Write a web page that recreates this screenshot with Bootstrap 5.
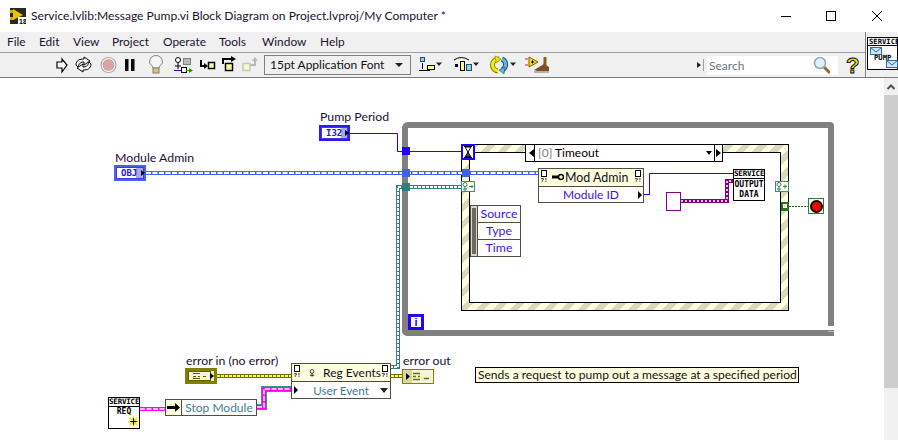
<!DOCTYPE html>
<html lang="en">
<head>
<meta charset="UTF-8">
<title>Service.lvlib:Message Pump.vi Block Diagram</title>
<link href="https://cdn.jsdelivr.net/npm/bootstrap@5.3.1/dist/css/bootstrap.min.css" rel="stylesheet">
<script src="https://cdn.jsdelivr.net/npm/bootstrap@5.3.1/dist/js/bootstrap.bundle.min.js"></script>
<style>
  body { width: 898px; height: 440px; overflow: hidden; background: #fff; color: #000; font-family: "Lato", "Noto Sans", sans-serif; font-size: 12px; }

  /* window chrome */
  .title-bar { height: 32px; padding-left: 10px; }
  .title-text { margin-left: 5px; font-size: 12.100px; color: #1c1030; white-space: nowrap; }
  .win-btns { margin-left: auto; }
  .chrome { height: 46px; background: #f0f0f0; border-bottom: 1px solid #7a7a7a; }
  .chrome-main { width: 865px; }
  .menu-row { height: 21px; border-bottom: 1px solid #a0a0a0; padding-left: 7px; flex-wrap: nowrap; }
  .menu-row .nav-link { padding: 0; color: #1c1030; font-size: 11.900px; line-height: 19px; }
  .menu-file { width: 32px; }
  .menu-edit { width: 34px; }
  .menu-view { width: 39px; }
  .menu-project { width: 51px; }
  .menu-operate { width: 56px; }
  .menu-tools { width: 43px; }
  .menu-window { width: 58px; }
  .tool-row { height: 24px; padding-left: 54px; }
  .font-ring { width: 147px; height: 20px; margin-left: 2px; margin-top: 2px; border: 1px solid #808080; padding-left: 5px; font-size: 12px; line-height: 18px; color: #111; }
  .ring-arrow { width: 0; height: 0; margin-left: auto; margin-right: 7px; border: 4px solid transparent; border-top-color: #222; border-bottom: 0; }
  .tools-b { margin-left: 5px; }
  .tools-c { margin-left: 138px; }
  .search-wrap { width: 131px; height: 19px; margin-top: 3px; background: #fff; }
  .search-box { flex: 1; min-width: 0; padding: 0 0 0 2px; border: 0; border-radius: 0; font-size: 12px; line-height: 19px; background: transparent; }
  .search-box::placeholder { color: #6d7480; opacity: 1; }
  .vi-icon { flex: 1; border-left: 1px solid #808080; padding-left: 1px; padding-top: 5px; overflow: hidden; }

  /* diagram */
  .diagram-row { height: 362px; }
  .diagram { position: relative; width: 884px; height: 362px; overflow: hidden; }
  .scroll-col { width: 14px; background: #f0f0f0; }
  .scroll-up { height: 17px; }
  .scroll-thumb { height: 293px; background: #cdcdcd; }

  .wire-layer { position: absolute; left: 0; top: 0; }
  .lv { position: absolute; }
  .lv-label { font-size: 12.300px; line-height: 15px; color: #1c1030; white-space: nowrap; }

  .loop-frame { left: 402px; top: 44px; width: 432px; height: 214px; border: 6px solid #808080; border-radius: 6px 4px 0 5px; }
  .case-frame { left: 461px; top: 66px; width: 328px; height: 167px; border: 1px solid #000; padding: 7px; background: repeating-linear-gradient(135deg, #ffffe1 0 6px, #d9d9c0 6px 12px); }
  .case-inner { height: 100%; background: #fff; border: 1px solid #000; }
  .case-select { left: 525px; top: 66px; width: 198px; height: 18px; border: 1px solid #000; background: #fff; font-size: 12px; line-height: 16px; }
  .sel-cell { width: 9px; border-right: 1px solid #000; }
  .sel-cell-r { width: 8px; border-left: 1px solid #000; border-right: 0; }
  .sel-name { padding-left: 3px; }
  .sel-idx { color: #808080; }
  .sel-drop { margin-left: auto; margin-right: 2px; align-self: center; width: 0; height: 0; border: 3.500px solid transparent; border-top: 4px solid #000; border-bottom: 0; }
  .sel-left { margin: 4px 0 0 3px; width: 0; height: 0; border: 4px solid transparent; border-right: 5px solid #000; border-left: 0; }
  .sel-right { margin: 4px 0 0 1px; width: 0; height: 0; border: 4px solid transparent; border-left: 5px solid #000; border-right: 0; }

  .term-i32 { left: 319px; top: 47px; width: 31px; height: 16px; border: 2px solid #2a18ff; background: #fff; }
  .term-obj { left: 114px; top: 87px; width: 32px; height: 16px; border: 2px solid #4a60ee; background: #fff; }
  .term-inner { height: 100%; border: 1px solid #3a3ae0; font: bold 9px/10px "DejaVu Sans Mono", monospace; color: #2018e0; padding-left: 4px; background: linear-gradient(90deg, #fff 0 19px, #a8a8f0 19px); position: relative; }
  .term-tip { position: absolute; right: -2px; top: 2px; width: 0; height: 0; border: 3px solid transparent; border-left: 4px solid #000; border-right: 0; }

  .tun { width: 8px; height: 8px; }
  .tun-i32 { left: 402px; top: 69px; background: #2000ff; }
  .tun-obj1 { left: 402px; top: 91px; background: #4060f0; }
  .tun-obj2 { left: 462px; top: 91px; background: #4060f0; }
  .tun-err { left: 402px; top: 105px; background: #2f7f7f; }
  .tun-stop { left: 781px; top: 124px; width: 8px; height: 9px; background: #2f6f1f; }
  .tun-stop-dot { width: 4px; height: 4px; margin: 2px; background: #d8f0c0; border: 1px solid #fff; }

  .timeout-term { left: 461px; top: 66px; width: 14px; height: 16px; background: #fff; border: 2px solid #2000ff; }
  .ev-term { width: 14px; height: 11px; background: #ffffe1; border: 1px solid #2f8f8f; }
  .ev-left { left: 461px; top: 103px; }
  .ev-right { left: 775px; top: 103px; }

  .iter-term { left: 408px; top: 236px; width: 16px; height: 16px; border: 3px solid #2000ff; background: #fff; color: #2000ff; font: bold 11px/10px "Liberation Sans", sans-serif; text-align: center; }

  /* property / invoke nodes */
  .lv-node { border: 1px solid #505040; background: #fff; }
  .node-head { height: 18px; background: #ffffe1; border-bottom: 1px solid #505040; padding: 0 1px; font-size: 12px; line-height: 17px; color: #111; }
  .node-row { height: 17px; line-height: 16px; font-size: 12px; text-align: center; position: relative; }
  .node-flags { width: 8px; flex: none; font: bold 6px/7px "Liberation Mono", monospace; color: #000; text-align: center; }
  .flag-doc { width: 6px; height: 7px; margin: 1px auto 0; border: 1px solid #000; background: #fff; }
  .txt-blue { color: #3c14e8; }
  .txt-teal { color: #3f8096; font-size: 11.700px; }
  .row-tip-r { position: absolute; right: 1px; top: 4px; width: 0; height: 0; border: 4px solid transparent; border-left: 4px solid #000; border-right: 0; }
  .row-tip-l { position: absolute; left: 2px; top: 4px; width: 0; height: 0; border: 4px solid transparent; border-left: 4px solid #000; border-right: 0; }
  .row-drop { position: absolute; right: 2px; top: 6px; width: 0; height: 0; border: 4px solid transparent; border-top: 5px solid #222; border-bottom: 0; }

  .mod-admin { left: 538px; top: 90px; width: 106px; height: 35px; }
  .mod-admin .node-head { font-size: 12.400px; }
  .head-name { flex: 1; padding-left: 1px; white-space: nowrap; }
  .reg-events { left: 291px; top: 285px; width: 100px; height: 36px; }
  .reg-events .head-name { padding-left: 8px; }

  .unbundle { left: 470px; top: 127px; width: 51px; height: 52px; border: 1px solid #505040; background: #fff; }
  .grip { width: 7px; background: #d8d8c4; border-right: 1px solid #505040; padding: 2px 1px; }
  .grip-bar { height: 100%; width: 4px; background: #6a6a62; }
  .ub-rows { flex: 1; }
  .ub-row { flex: 1; text-align: center; font-size: 12.300px; line-height: 15px; color: #3c14e8; border-bottom: 1px solid #505040; }
  .ub-row:last-child { border-bottom: 0; }

  .stop-module { left: 165px; top: 321px; width: 92px; height: 17px; border: 1px solid #505040; background: #fff; }
  .sm-cell { width: 16px; background: #ffffe1; border-right: 1px solid #505040; }
  .sm-name { flex: 1; text-align: center; font-size: 12px; line-height: 15px; color: #3f8096; white-space: nowrap; }

  .pix-box { border: 1.500px solid #000; background: #fff; font: bold 8px/10px "DejaVu Sans Mono", monospace; text-align: center; color: #000; }
  .pix-head { border-bottom: 1px solid #000; height: 9px; font-size: 7.500px; line-height: 8px; letter-spacing: -.2px; white-space: nowrap; overflow: hidden; }
  .svc-output { left: 733px; top: 91px; width: 32px; height: 32px; }
  .svc-output .pix-body { padding-top: 1px; }
  .svc-req { left: 108px; top: 319px; width: 32px; height: 32px; position: absolute; }
  .svc-req .pix-body { padding-top: 1px; line-height: 8px; }

  .purple-const { left: 666px; top: 114px; width: 15px; height: 19px; border: 1px solid #800080; background: #fff; }
  .stop-btn { left: 808px; top: 120px; width: 16px; height: 16px; border: 1px solid #2f7f1f; background: #fff; padding: .5px; }
  .stop-dot { width: 13px; height: 13px; border-radius: 50%; background: #f00; border: 2px solid #000; }

  .err-in { left: 185px; top: 290px; width: 32px; height: 16px; border: 3px solid #808000; background: #e8e8c0; }
  .err-out { left: 402px; top: 291px; width: 32px; height: 15px; border: 1px solid #808000; background: #f6f6d8; }
  .lb-pump { left: 320px; top: 31px; }
  .lb-mod { left: 115px; top: 72px; }
  .lb-errin { left: 186px; top: 275px; }
  .lb-errout { left: 403px; top: 275px; }
  .comment-box { left: 475px; top: 289px; width: 324px; height: 16px; border: 1px solid #000; background: #ffffe1; font-size: 12.050px; line-height: 14px; padding-left: 2px; color: #111; white-space: nowrap; }
</style>
</head>
<body>
  <div class="title-bar d-flex align-items-center">
    <svg width="16" height="16" viewBox="0 0 16 16">
      <rect width="16" height="16" fill="#2a2a1a"/>
      <rect x="0" y="2" width="4" height="3" fill="#e0a000"/><rect x="0" y="9" width="4" height="3" fill="#e0a000"/>
      <polygon points="3,1 13,7 3,12" fill="#f0c000"/>
      <rect x="8" y="9" width="8" height="7" fill="#fff"/>
      <text x="9" y="15.500" font-size="7" font-weight="700" font-family="Liberation Sans" fill="#000">18</text>
    </svg>
    <span class="title-text">Service.lvlib:Message Pump.vi Block Diagram on Project.lvproj/My Computer *</span>
    <svg class="win-btns" width="122" height="20" viewBox="776 5 122 20">
      <path d="M781 15.500H791" stroke="#000" fill="none"/>
      <rect x="826.500" y="10.500" width="9" height="9" stroke="#000" fill="none"/>
      <path d="M872 10L882 20M882 10L872 20" stroke="#000" fill="none"/>
    </svg>
  </div>

  <div class="chrome d-flex">
    <div class="chrome-main">
      <ul class="nav menu-row">
        <li class="nav-item menu-file"><a class="nav-link" href="#">File</a></li>
        <li class="nav-item menu-edit"><a class="nav-link" href="#">Edit</a></li>
        <li class="nav-item menu-view"><a class="nav-link" href="#">View</a></li>
        <li class="nav-item menu-project"><a class="nav-link" href="#">Project</a></li>
        <li class="nav-item menu-operate"><a class="nav-link" href="#">Operate</a></li>
        <li class="nav-item menu-tools"><a class="nav-link" href="#">Tools</a></li>
        <li class="nav-item menu-window"><a class="nav-link" href="#">Window</a></li>
        <li class="nav-item"><a class="nav-link" href="#">Help</a></li>
      </ul>
      <div class="tool-row d-flex">
        <svg width="208" height="24" viewBox="54 53 208 24">
          <!-- run -->
          <polygon points="57,62 62,62 62,59 67,65 62,72 62,68 57,68" fill="#fff" stroke="#000" stroke-width="1.200"/>
          <!-- run continuously -->
          <path d="M76 65C76 60 80 59 84 59V57L90 61L84 65V62C81 62 79 63 78 67Z" fill="#fff" stroke="#000"/>
          <path d="M91 64C91 69 87 70 83 70V72L77 68L83 64V67C86 67 88 66 89 62Z" fill="#fff" stroke="#000"/>
          <!-- abort -->
          <circle cx="108.500" cy="65" r="7.500" fill="#fff" stroke="#a8a8a8" stroke-width="1.200"/>
          <circle cx="108.500" cy="65" r="6" fill="#d8a4a4"/>
          <!-- pause -->
          <rect x="125" y="59" width="3.500" height="12" fill="#000"/><rect x="131" y="59" width="3.500" height="12" fill="#000"/>
          <!-- highlight -->
          <path d="M153 68C153 65 149.500 65 149.500 62A6.500 6.500 0 0 1 162.500 62C162.500 65 159 65 159 68Z" fill="#f6f6f6" stroke="#808080"/>
          <rect x="153" y="68" width="6" height="5" fill="#d8c860" stroke="#808080"/>
          <!-- retain wire values -->
          <circle cx="178" cy="60" r="2.500" fill="#fff" stroke="#000"/>
          <path d="M178 63V69M175 66H181" stroke="#000" fill="none"/>
          <rect x="183.500" y="58.500" width="7" height="6" fill="#b8b8b8" stroke="#808080"/>
          <path d="M174 70.500H181" stroke="#2000ff"/>
          <rect x="181.500" y="67.500" width="5" height="5" fill="#fff" stroke="#000"/>
          <path d="M186 70.500H190" stroke="#10a010"/><polygon points="189,68 193,70.500 189,73" fill="#10a010"/>
          <!-- step into -->
          <path d="M201 60V66H205" stroke="#000" stroke-width="2" fill="none"/><polygon points="204,63 208,66 204,69" fill="#000"/>
          <rect x="208.500" y="62.500" width="6" height="6" fill="#ffff90" stroke="#000" stroke-width="1.500"/>
          <!-- step over -->
          <path d="M223 64V59H232" stroke="#000" stroke-width="2" fill="none"/><polygon points="231,56 236,59 231,62" fill="#000"/>
          <rect x="225.500" y="63.500" width="7" height="7" fill="#ffff90" stroke="#000" stroke-width="1.500"/>
          <!-- step out, disabled -->
          <rect x="243" y="63.500" width="7" height="7" fill="#f8f8d0" stroke="#c8c8b0" stroke-width="1.500"/>
          <path d="M250 65H255V60" stroke="#b8b8b8" stroke-width="2" fill="none"/><polygon points="252,61 255,57 258,61" fill="#b8b8b8"/>
        </svg>
        <div class="font-ring d-flex align-items-center">15pt Application Font<span class="ring-arrow"></span></div>
        <svg class="tools-b" width="140" height="24" viewBox="416 53 140 24">
          <!-- align -->
          <rect x="420.500" y="57.500" width="4" height="4" fill="#90d0f0" stroke="#205070"/>
          <path d="M422.500 63V69M419 70.500H430" stroke="#000" fill="none"/>
          <rect x="427.500" y="65.500" width="7" height="4" fill="#ffff80" stroke="#000"/>
          <polygon points="436,62.500 442,62.500 439,66" fill="#222"/>
          <!-- distribute -->
          <path d="M454 60Q461 55 469 60" stroke="#000" fill="none"/>
          <rect x="455" y="64" width="3" height="3" fill="#000"/>
          <rect x="460.500" y="61.500" width="4" height="9" fill="#ffff80" stroke="#000"/>
          <rect x="466.500" y="64.500" width="5" height="6" fill="#90d0f0" stroke="#205070"/>
          <polygon points="473,62.500 479,62.500 476,66" fill="#222"/>
          <!-- reorder -->
          <path d="M499 59A6 6 0 0 0 498 71" fill="none" stroke="#808000" stroke-width="5"/>
          <path d="M499 59A6 6 0 0 0 498 71" fill="none" stroke="#f0f000" stroke-width="3"/>
          <polygon points="495,56 501,59 496,63" fill="#f0f000" stroke="#808000" stroke-width=".6"/>
          <path d="M502 59A6 6 0 0 1 502 70" fill="none" stroke="#205070" stroke-width="5"/>
          <path d="M502 59A6 6 0 0 1 502 70" fill="none" stroke="#60b8e0" stroke-width="3"/>
          <polygon points="505,67 499,70 504,74" fill="#60b8e0" stroke="#205070" stroke-width=".6"/>
          <polygon points="510,62.500 516,62.500 513,66" fill="#222"/>
          <!-- clean up -->
          <polygon points="529,57 538,62 529,67" fill="#f0e000" stroke="#806000"/>
          <path d="M531 62H534M532.500 60.500V63.500" stroke="#000"/>
          <path d="M528 59H525M528 65H525" stroke="#e02020"/>
          <path d="M545 57V66" stroke="#806020" stroke-width="3"/>
          <polygon points="534,70 544,64 549,67 549,72 540,72" fill="#805020"/>
          <path d="M534 72H549" stroke="#b0b0b0" stroke-width="2"/>
        </svg>
        <svg class="tools-c" width="13" height="24" viewBox="694 53 13 24">
          <polygon points="697,62 701,65 697,68" fill="#222"/>
          <path d="M703.500 59V71" stroke="#a0a0a0"/>
        </svg>
        <div class="search-wrap d-flex">
          <input class="form-control search-box" type="text" placeholder="Search">
          <svg class="me-2" width="17" height="19" viewBox="813 56 17 19">
          <path d="M824 67L830 73" stroke="#a06820" stroke-width="3"/>
          <circle cx="820" cy="63" r="5.500" fill="#dff0fb" stroke="#90a8c0" stroke-width="1.500"/>
          </svg>
        </div>
        <svg width="27" height="24" viewBox="838 53 27 24">
          <text x="846" y="73" font-size="22" font-weight="700" font-family="Liberation Sans" fill="#f0e000" stroke="#000" stroke-width=".9">?</text>
        </svg>
      </div>
    </div>
    <div class="vi-icon">
      <div class="pix-box svc-vi position-relative">
        <svg width="31" height="31" viewBox="867 39 31 31" class="d-block">
          <rect x="869.500" y="48.500" width="11" height="7" fill="#cfe4f8" stroke="#3070a0"/><path d="M870 49L875 53L880 49" stroke="#3070a0" fill="none"/>
          <rect x="885.500" y="61.500" width="11" height="7" fill="#cfe4f8" stroke="#3070a0"/><path d="M886 62L891 66L896 62" stroke="#3070a0" fill="none"/>
          <path d="M867 46.500H898" stroke="#000"/>
          <text x="868" y="45" font-size="7.200" font-weight="700" font-family="DejaVu Sans Mono">SERVICE</text>
          <text x="873" y="61" font-size="7.200" font-weight="700" font-family="DejaVu Sans Mono">PUMP</text>
        </svg>
      </div>
    </div>
  </div>

  <div class="diagram-row d-flex">
    <div class="diagram">
      <div class="lv loop-frame"></div>
      <div class="lv case-frame"><div class="case-inner"></div></div>

      <svg class="wire-layer" width="884" height="362" viewBox="0 78 884 362">
        <!-- loop resize nib -->
        <rect x="827" y="326" width="8" height="4" fill="#fff"/>
        <rect x="828" y="331" width="6" height="1" fill="#bbb"/>
        <!-- pump period -->
        <path d="M350 133.500H397.500V151.500H461" fill="none" stroke="#2000ff"/>
        <path d="M475 152.500H525" fill="none" stroke="#000"/>
        <!-- module admin class wire -->
        <path d="M146 173H538" fill="none" stroke="#4a60f0" stroke-width="4"/>
        <path d="M146 173H538" fill="none" stroke="#fff" stroke-width="2" stroke-dasharray="5 1.500"/>
        <!-- event registration -->
        <path d="M461 187H398V367H391" fill="none" stroke="#2f8080" stroke-width="4"/>
        <path d="M461 187H398V367H391" fill="none" stroke="#fff" stroke-width="2" stroke-dasharray="3 1"/>
        <!-- module id to output -->
        <path d="M644 194.500H649.500V173.500H733" fill="none" stroke="#2000ff"/>
        <!-- purple data -->
        <path d="M681 201H727V181H733" fill="none" stroke="#800080" stroke-width="4"/>
        <path d="M681 201H727V181H733" fill="none" stroke="#fff" stroke-width="1.500" stroke-dasharray="2 2"/>
        <!-- stop -->
        <path d="M789 206.500H808" fill="none" stroke="#206010" stroke-dasharray="2 1"/>
        <!-- error -->
        <path d="M217 376H291M391 376H402" fill="none" stroke="#707000" stroke-width="4"/>
        <path d="M217 376H291M391 376H402" fill="none" stroke="#ffff30" stroke-width="2" stroke-dasharray="3 1"/>
        <!-- user event -->
        <path d="M257 407H264V389H291" fill="none" stroke="#3f9090" stroke-width="6"/>
        <path d="M140 409H165" fill="none" stroke="#ff00ff" stroke-width="4"/>
        <path d="M257 407H264V389H291" fill="none" stroke="#ff00ff" stroke-width="4"/>
        <path d="M140 409H165M257 407H264V389H291" fill="none" stroke="#fff" stroke-width="1.500" stroke-dasharray="5 1.500"/>
      </svg>

      <div class="lv lv-label lb-pump">Pump Period</div>
      <div class="lv term-i32"><div class="term-inner">I32<span class="term-tip"></span></div></div>
      <div class="lv lv-label lb-mod">Module Admin</div>
      <div class="lv term-obj"><div class="term-inner">OBJ<span class="term-tip"></span></div></div>

      <div class="lv tun tun-i32"></div>
      <div class="lv tun tun-obj1"></div>
      <div class="lv tun tun-obj2"></div>
      <div class="lv tun tun-err"></div>

      <div class="lv timeout-term">
        <svg width="10" height="12" viewBox="0 0 10 12" class="d-block">
          <path d="M1 .5H9M1 11.500H9" stroke="#000"/>
          <polygon points="2,1 8,1 5,6" fill="#fff" stroke="#000"/>
          <polygon points="5,6 8,11 2,11" fill="#404040" stroke="#000"/>
        </svg>
      </div>
      <div class="lv ev-term ev-left">
        <svg width="12" height="9" viewBox="0 0 12 9" class="d-block"><circle cx="3" cy="2.500" r="2" fill="none" stroke="#2f7f7f"/><path d="M3 4.500V9M1 7H5M7 4.500H11M9.500 3L11 4.500L9.500 6" stroke="#2f7f7f" fill="none"/></svg>
      </div>

      <div class="lv case-select d-flex">
        <span class="sel-cell"><span class="sel-left d-block"></span></span>
        <span class="sel-name"><span class="sel-idx">[0]</span> Timeout</span>
        <span class="sel-drop"></span>
        <span class="sel-cell sel-cell-r"><span class="sel-right d-block"></span></span>
      </div>

      <div class="lv lv-node mod-admin">
        <div class="node-head d-flex">
          <div class="node-flags"><div class="flag-doc"></div>?!</div>
          <svg class="ms-1 mt-1" width="12" height="8" viewBox="0 0 12 8"><circle cx="9" cy="4" r="2.500" fill="none" stroke="#000" stroke-width="1.500"/><path d="M0 4H7" stroke="#000" stroke-width="3"/></svg>
          <div class="head-name">Mod Admin</div>
          <div class="node-flags"><div class="flag-doc"></div>?!</div>
        </div>
        <div class="node-row txt-blue">Module ID<span class="row-tip-r"></span></div>
      </div>

      <div class="lv unbundle d-flex">
        <div class="grip"><div class="grip-bar"></div></div>
        <div class="ub-rows d-flex flex-column">
          <div class="ub-row">Source</div>
          <div class="ub-row">Type</div>
          <div class="ub-row">Time</div>
        </div>
      </div>

      <div class="lv pix-box svc-output">
        <div class="pix-head">SERVICE</div>
        <div class="pix-body">OUTPUT<br>DATA</div>
      </div>
      <div class="lv purple-const"></div>

      <div class="lv ev-term ev-right">
        <svg width="12" height="9" viewBox="0 0 12 9" class="d-block"><circle cx="3" cy="2.500" r="2" fill="none" stroke="#2f7f7f"/><path d="M3 4.500V9M1 7H5M7 4.500H11M9 2.500V6.500" stroke="#2f7f7f" fill="none"/></svg>
      </div>
      <div class="lv tun tun-stop"><div class="tun-stop-dot"></div></div>
      <div class="lv stop-btn"><div class="stop-dot"></div></div>

      <div class="lv iter-term">i</div>

      <div class="lv lv-label lb-errin">error in (no error)</div>
      <div class="lv err-in">
        <svg width="26" height="10" viewBox="0 0 26 10" class="d-block">
          <rect x=".5" y=".5" width="22" height="9" fill="#f4f4d4" stroke="#606000"/>
          <path d="M5 2.500H12M5 5.500H8M10 5.500H12M5 7.500H12M15 5.500H18" stroke="#606000" fill="none"/>
          <polygon points="22,2 26,5 22,8" fill="#000"/>
        </svg>
      </div>
      <div class="lv lv-label lb-errout">error out</div>
      <div class="lv err-out">
        <svg width="30" height="13" viewBox="0 0 30 13" class="d-block">
          <rect x="0" y="0" width="9" height="13" fill="#d8d8a0"/>
          <polygon points="3,3 7,6.500 3,10" fill="#000"/>
          <path d="M10 3.500H17M10 6.500H13M15 6.500H17M10 9.500H17M21 8.500H26" stroke="#707000" stroke-width="1.500" fill="none"/>
        </svg>
      </div>

      <div class="lv lv-node reg-events">
        <div class="node-head d-flex">
          <div class="node-flags"><div class="flag-doc"></div>?!</div>
          <svg class="ms-2 mt-1" width="8" height="10" viewBox="0 0 8 10"><circle cx="4" cy="3" r="2.500" fill="none" stroke="#000"/><path d="M4 5.500V10M1 8H7" stroke="#000"/></svg>
          <div class="head-name">Reg Events</div>
          <div class="node-flags"><div class="flag-doc"></div>?!</div>
        </div>
        <div class="node-row txt-teal"><span class="row-tip-l"></span>User Event<span class="row-drop"></span></div>
      </div>

      <div class="svc-req pix-box">
        <div class="pix-head">SERVICE</div>
        <div class="pix-body">REQ</div>
        <svg class="d-block ms-auto" width="11" height="11" viewBox="0 0 10 10"><path d="M5 0V10M0 5H10M1.500 1.500L8.500 8.500M8.500 1.500L1.500 8.500" stroke="#f0e000" stroke-width="1.300"/><path d="M2 5H8M5 2V8" stroke="#000"/></svg>
      </div>
      <div class="lv stop-module d-flex">
        <div class="sm-cell"><svg width="15" height="15" viewBox="0 0 15 15" class="d-block"><path d="M1 7.500H9" stroke="#000" stroke-width="3"/><polygon points="9,3 14,7.500 9,12" fill="#000"/></svg></div>
        <div class="sm-name">Stop Module</div>
      </div>

      <div class="lv comment-box">Sends a request to pump out a message at a specified period</div>
    </div>
    <div class="scroll-col">
      <div class="scroll-up">
        <svg width="14" height="17" viewBox="0 0 14 17" class="d-block"><path d="M3.500 11L7 7.500L10.500 11" fill="none" stroke="#505050" stroke-width="2"/></svg>
      </div>
      <div class="scroll-thumb"></div>
    </div>
  </div>
</body>
</html>
